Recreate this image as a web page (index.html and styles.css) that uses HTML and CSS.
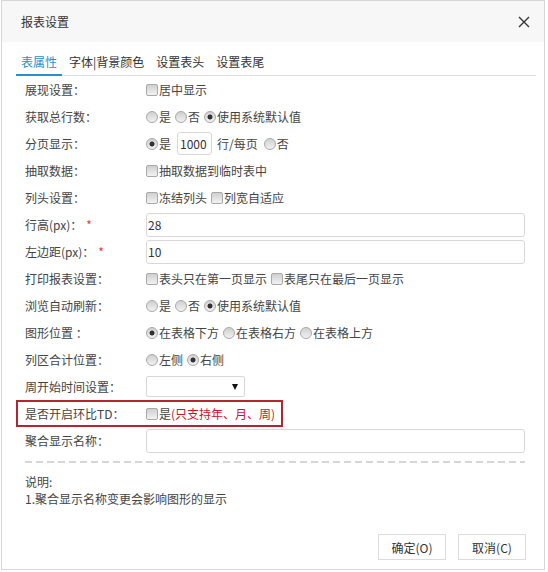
FILE: index.html
```html
<!DOCTYPE html>
<html lang="zh-CN">
<head>
  <meta charset="UTF-8">
  <title>报表设置</title>
  <link rel="stylesheet" href="styles.css">
</head>
<body>
  <div class="dialog">
    <div class="dialog-header">
      <span class="dialog-title">报表设置</span>
      <button class="close-button" type="button">
        <svg width="12" height="12" viewBox="0 0 12 12">
          <path d="M1 1 L11 11 M11 1 L1 11" stroke="#333" stroke-width="1.4" fill="none"/>
        </svg>
      </button>
    </div>

    <div class="tabs">
      <span class="tab active">表属性</span>
      <span class="tab">字体|背景颜色</span>
      <span class="tab">设置表头</span>
      <span class="tab">设置表尾</span>
    </div>

    <div class="form">
      <div class="row">
        <span class="row-label">展现设置：</span>
        <label class="option"><input type="checkbox">居中显示</label>
      </div>
      <div class="row">
        <span class="row-label">获取总行数：</span>
        <label class="option"><input type="radio" name="total">是</label>
        <label class="option"><input type="radio" name="total">否</label>
        <label class="option"><input type="radio" name="total" checked>使用系统默认值</label>
      </div>
      <div class="row">
        <span class="row-label">分页显示：</span>
        <label class="option"><input type="radio" name="page" checked>是</label>
        <input class="text-input small" type="text" value="1000">
        <span class="unit">行/每页</span>
        <label class="option"><input type="radio" name="page">否</label>
      </div>
      <div class="row">
        <span class="row-label">抽取数据：</span>
        <label class="option"><input type="checkbox">抽取数据到临时表中</label>
      </div>
      <div class="row">
        <span class="row-label">列头设置：</span>
        <label class="option"><input type="checkbox">冻结列头</label>
        <label class="option"><input type="checkbox">列宽自适应</label>
      </div>
      <div class="row">
        <span class="row-label">行高(px)：<span class="required">*</span></span>
        <input class="text-input" type="text" value="28">
      </div>
      <div class="row">
        <span class="row-label">左边距(px)：<span class="required">*</span></span>
        <input class="text-input" type="text" value="10">
      </div>
      <div class="row">
        <span class="row-label">打印报表设置：</span>
        <label class="option"><input type="checkbox">表头只在第一页显示</label>
        <label class="option"><input type="checkbox">表尾只在最后一页显示</label>
      </div>
      <div class="row">
        <span class="row-label">浏览自动刷新：</span>
        <label class="option"><input type="radio" name="refresh">是</label>
        <label class="option"><input type="radio" name="refresh">否</label>
        <label class="option"><input type="radio" name="refresh" checked>使用系统默认值</label>
      </div>
      <div class="row">
        <span class="row-label">图形位置 ：</span>
        <label class="option"><input type="radio" name="chart" checked>在表格下方</label>
        <label class="option"><input type="radio" name="chart">在表格右方</label>
        <label class="option"><input type="radio" name="chart">在表格上方</label>
      </div>
      <div class="row">
        <span class="row-label">列区合计位置：</span>
        <label class="option"><input type="radio" name="sum">左侧</label>
        <label class="option"><input type="radio" name="sum" checked>右侧</label>
      </div>
      <div class="row">
        <span class="row-label">周开始时间设置：</span>
        <span class="select"><span class="select-arrow"></span></span>
      </div>
      <div class="row highlight">
        <span class="row-label">是否开启环比TD：</span>
        <label class="option"><input type="checkbox">是<span class="hint">(只支持年、月、周)</span></label>
      </div>
      <div class="row">
        <span class="row-label">聚合显示名称：</span>
        <input class="text-input" type="text" value="">
      </div>
    </div>

    <div class="divider"></div>

    <div class="note">
      <div class="note-line">说明:</div>
      <div class="note-line">1.聚合显示名称变更会影响图形的显示</div>
    </div>

    <div class="dialog-footer">
      <button class="footer-button" type="button">确定(O)</button>
      <button class="footer-button" type="button">取消(C)</button>
    </div>
  </div>
</body>
</html>
```

FILE: styles.css
```css
* {
  box-sizing: border-box;
}

body {
  margin: 0;
  padding: 0;
  background: #fff;
  font-family: "Noto Sans CJK SC", "Noto Sans", sans-serif;
  font-size: 12px;
  color: #444;
}

.dialog {
  margin-left: 1px;
  width: 544px;
  height: 570px;
  border: 1px solid #d6d6d6;
  background: #fff;
  display: flex;
  flex-direction: column;
}

.dialog-header {
  height: 41px;
  background: #f7f7f7;
  display: flex;
  align-items: center;
  justify-content: space-between;
  padding: 0 10px 0 19px;
}

.dialog-title {
  font-size: 12px;
  color: #333;
}

.close-button {
  border: none;
  background: none;
  padding: 0;
  width: 20px;
  height: 20px;
  display: flex;
  align-items: center;
  justify-content: center;
  cursor: pointer;
}

.tabs {
  display: flex;
  margin: 0 8px 0 14px;
  padding-top: 10px;
  border-bottom: 1px solid #dcdcdc;
}

.tab {
  padding: 0 5px 2px;
  margin-right: 2px;
  line-height: 20px;
  color: #333;
  border-bottom: 2px solid transparent;
  margin-bottom: -1px;
}

.tab.active {
  color: #2a8fcf;
  border-bottom-color: #2a8fcf;
}

.form {
  padding: 0 19px 0 23px;
}

.row {
  display: flex;
  align-items: center;
  height: 27px;
}

.row-label {
  width: 121px;
  flex-shrink: 0;
  color: #444;
}

.required {
  color: #e4393c;
  margin-left: 4px;
}

.option {
  display: flex;
  align-items: center;
  margin-right: 4px;
  color: #444;
}

.option input {
  appearance: none;
  -webkit-appearance: none;
  margin: 0 1px 0 0;
  width: 12px;
  height: 12px;
  border: 1px solid #a9a9a9;
  background: linear-gradient(#cfcfcf, #f2f2f2);
}

.option input[type="checkbox"] {
  border-radius: 2px;
}

.option input[type="radio"] {
  border-radius: 50%;
}

.option input[type="radio"]:checked {
  background: radial-gradient(circle, #333 0 2.2px, transparent 2.8px), linear-gradient(#cfcfcf, #f2f2f2);
}

.text-input {
  flex: 1;
  height: 24px;
  border: 1px solid #d8d8d8;
  border-radius: 3px;
  padding: 0 1px;
  font-family: inherit;
  font-size: 12px;
  color: #333;
}

.text-input.small {
  flex: none;
  width: 35px;
  height: 23px;
  padding: 0 2px;
  margin-left: 2px;
}

.unit {
  margin: 0 6px 0 5px;
}

.select {
  width: 99px;
  height: 21px;
  border: 1px solid #d8d8d8;
  border-radius: 2px;
  display: flex;
  align-items: center;
  justify-content: flex-end;
  padding-right: 6px;
}

.select-arrow {
  width: 0;
  height: 0;
  border-left: 3.5px solid transparent;
  border-right: 3.5px solid transparent;
  border-top: 6px solid #111;
}

.row.highlight {
  width: 267px;
  margin-left: -9px;
  padding-left: 7px;
  border: 2px solid #b3262f;
}

.hint {
  color: #d0112b;
}

.divider {
  margin: 7px 19px 0 23px;
  height: 2px;
  background: repeating-linear-gradient(to right, #d6d6d6 0 7px, transparent 7px 11px);
}

.note {
  margin: 10px 0 0 23px;
  color: #444;
}

.note-line {
  line-height: 17px;
}

.dialog-footer {
  margin-top: auto;
  display: flex;
  justify-content: flex-end;
  gap: 12px;
  padding: 0 18px 9px 0;
}

.footer-button {
  width: 68px;
  height: 26px;
  border: 1px solid #dcdcdc;
  background: #fff;
  font-family: inherit;
  font-size: 12px;
  color: #333;
  cursor: pointer;
}
```
